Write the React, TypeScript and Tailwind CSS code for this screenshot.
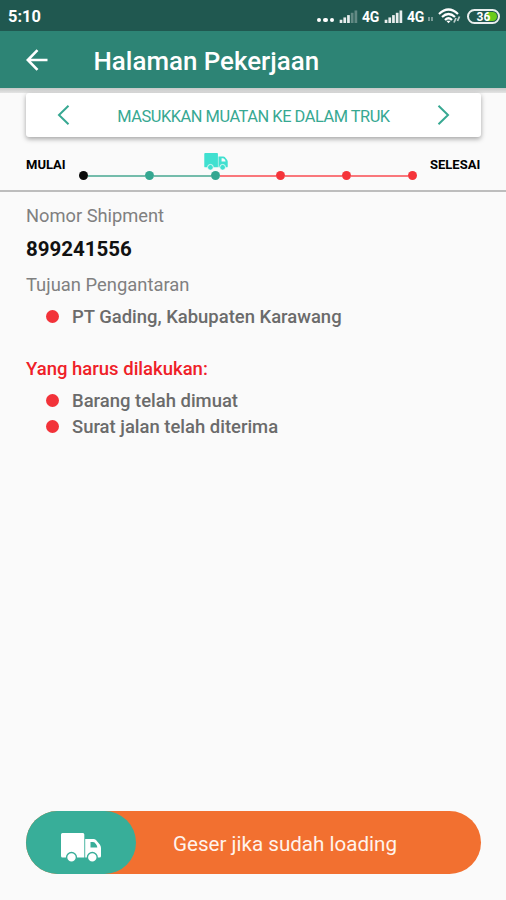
'use client';

import { useState } from 'react';

interface Step {
  name: string;
  status: 'start' | 'done' | 'pending';
}

interface Shipment {
  number: string;
  destinations: string[];
  tasks: string[];
}

const steps: Step[] = [
  { name: 'Mulai', status: 'start' },
  { name: 'Menuju lokasi muat', status: 'done' },
  { name: 'Masukkan muatan ke dalam truk', status: 'done' },
  { name: 'Pengantaran', status: 'pending' },
  { name: 'Bongkar muatan', status: 'pending' },
  { name: 'Selesai', status: 'pending' },
];

const dotColors: Record<Step['status'], string> = {
  start: 'bg-[#0b0b0b]',
  done: 'bg-[#35a791]',
  pending: 'bg-[#f5343a]',
};

const lineColors: Record<Step['status'], string> = {
  start: 'bg-[#0b0b0b]',
  done: 'bg-[#74bcab]',
  pending: 'bg-[#f9777b]',
};

const shipment: Shipment = {
  number: '899241556',
  destinations: ['PT Gading, Kabupaten Karawang'],
  tasks: ['Barang telah dimuat', 'Surat jalan telah diterima'],
};

function Truck({ className }: { className: string }) {
  return (
    <svg viewBox="0 0 40 29" className={className} fill="currentColor" aria-hidden="true">
      <path
        fillRule="evenodd"
        d="M1.5 0H22Q23.3 0 23.3 1.5V24.5H1.5Q0 24.5 0 23V1.5Q0 0 1.5 0ZM24.2 6H32.5Q34 6 35 7L38.8 11.5Q40 13 40 15V23Q40 24.5 38.5 24.5H24.2ZM29.5 9V14.5H36.3Q36.2 12.8 35 11.3L33.6 9.6Q33 9 32 9Z"
      />
      <g className="stroke-(--truck-bg)" strokeWidth="1.4">
        <circle cx="10.5" cy="24.4" r="4.9" />
        <circle cx="31.3" cy="24.4" r="4.9" />
      </g>
    </svg>
  );
}

function Signal({ className, bars }: { className: string; bars: number }) {
  return (
    <svg viewBox="0 0 19 14" className={className} fill="#fff" aria-hidden="true">
      {[0, 1, 2, 3, 4].map((i) => (
        <rect
          key={i}
          x={i * 4}
          y={10.5 - i * 2.5}
          width="2.9"
          height={3.5 + i * 2.5}
          opacity={i < bars ? 0.9 : 0.3}
        />
      ))}
    </svg>
  );
}

function StatusBar() {
  return (
    <div className="flex h-[31px] items-center bg-[#205850] pl-2 pr-[6px] pt-px text-white">
      <span className="pt-[3px] text-[16.4px] font-bold leading-none">5:10</span>
      <div className="ml-auto flex items-center">
        <div className="mr-[5px] mt-2 flex gap-[2px]">
          <i className="size-[4.5px] rounded-full bg-white" />
          <i className="size-[4.5px] rounded-full bg-white" />
          <i className="size-[4.5px] rounded-full bg-white" />
        </div>
        <Signal className="mr-[4px] h-[13px] w-[19px]" bars={3} />
        <span className="mr-[4px] w-[18px] pt-[2px] text-[14px] font-bold leading-none tracking-[-0.3px]">4G</span>
        <Signal className="mr-[4px] h-[13px] w-[19px]" bars={5} />
        <span className="w-[18px] pt-[2px] text-[14px] font-bold leading-none tracking-[-0.3px]">4G</span>
        <div className="ml-[3px] mr-[5px] mt-[6px] flex gap-[1px]">
          <i className="h-[4px] w-[2px] bg-white/40" />
          <i className="h-[4px] w-[2px] bg-white/40" />
        </div>
        <svg viewBox="0 0 23 16" className="mr-[6px] h-[16px] w-[23px]" fill="none" stroke="#fff" strokeWidth="2.2" aria-hidden="true">
          <path d="M1 6Q10.5 -3 20 6M4 9Q10.5 3 17 9M7 12Q10.5 8.5 14 12" />
          <path d="M8.3 12.8L10.5 15.2L12.7 12.8Z" fill="#fff" stroke="none" />
          <path d="M16 14.5L18 10M19.5 13L21.5 8.5" strokeWidth="1.8" opacity="0.7" />
        </svg>
        <div className="relative flex h-[15px] w-[33px] items-center justify-center overflow-hidden rounded-full border-2 border-white/90">
          <i className="absolute inset-y-px right-px w-[10px] rounded-r-full bg-[#6acb1c]" />
          <span className="relative pt-px text-[12px] font-bold leading-none">36</span>
        </div>
      </div>
    </div>
  );
}

function Bullets({ items }: { items: string[] }) {
  return (
    <ul className="pl-5">
      {items.map((item) => (
        <li key={item} className="flex h-[26px] items-center">
          <i className="mr-[13px] size-[13px] rounded-full bg-[#f23239]" />
          <span className="pt-[3px] text-[18.45px] font-medium text-[#6b6b6b]">{item}</span>
        </li>
      ))}
    </ul>
  );
}

export default function App() {
  const [current, setCurrent] = useState(2);

  return (
    <div className="flex h-[900px] w-[506px] flex-col overflow-hidden bg-[#fafafa] font-['Roboto',sans-serif]">
      <StatusBar />

      <header className="flex h-[57px] shrink-0 items-center bg-[#2d8475] pl-[26px] text-white">
        <button aria-label="Kembali" className="mr-[45.5px]">
          <svg viewBox="0 0 22 22" className="size-[22px]" fill="none" stroke="currentColor" strokeWidth="2.6" aria-hidden="true">
            <path d="M11.5 1.2L1.8 11L11.5 20.8M2 11H21.5" />
          </svg>
        </button>
        <h1 className="pt-[4px] text-[25.9px] font-medium leading-none">Halaman Pekerjaan</h1>
      </header>
      <div className="h-[5px] shrink-0 bg-linear-to-b from-[#c6c9c8] to-[#e4e4e4]" />

      {/* Step switcher */}
      <div className="mx-[26px] flex h-[44px] w-[455px] shrink-0 items-center justify-between rounded-[3px] bg-white px-[31px] text-[#37a892] shadow-[0_2px_5px_rgba(0,0,0,0.35)]">
        <button aria-label="Sebelumnya" onClick={() => setCurrent(Math.max(0, current - 1))}>
          <svg viewBox="0 0 13 20" className="h-[20px] w-[13px]" fill="none" stroke="currentColor" strokeWidth="2" aria-hidden="true">
            <path d="M11.5 0.8L2 10L11.5 19.2" />
          </svg>
        </button>
        <span className="pt-[4px] text-[16.4px] uppercase tracking-[-0.47px]">{steps[current].name}</span>
        <button aria-label="Berikutnya" onClick={() => setCurrent(Math.min(steps.length - 1, current + 1))}>
          <svg viewBox="0 0 13 20" className="h-[20px] w-[13px]" fill="none" stroke="currentColor" strokeWidth="2" aria-hidden="true">
            <path d="M1.5 0.8L11 10L1.5 19.2" />
          </svg>
        </button>
      </div>

      {/* Progress */}
      <div className="flex h-[55px] shrink-0 border-b-2 border-[#bdbdbd] pl-[26px] pr-[25px] text-[13px] font-bold text-black">
        <span className="w-[53px] pt-[18px]">MULAI</span>
        <div className="flex flex-1 items-start pt-[34px]">
          {steps.map((step, i) => (
            <div key={step.name} className={i === 0 ? 'flex items-center' : 'flex flex-1 items-center'}>
              {i > 0 && <div className={`h-[2px] flex-1 ${lineColors[step.status]}`} />}
              <div className={`relative size-[9px] rounded-full ${dotColors[step.status]}`}>
                {i === current && (
                  <Truck className="absolute -left-[7px] -top-[18px] h-[17px] w-[24px] max-w-none text-[#40e0d0] [--truck-bg:#fafafa]" />
                )}
              </div>
            </div>
          ))}
        </div>
        <span className="ml-[13px] w-[51px] pt-[18px]">SELESAI</span>
      </div>

      {/* Shipment details */}
      <main className="flex-1 px-[26px] pt-[11px]">
        <p className="text-[18.3px] leading-[26px] text-[#808080]">Nomor Shipment</p>
        <p className="mt-[7px] text-[20.5px] font-bold leading-[26px] text-[#111]">{shipment.number}</p>
        <p className="mb-[5px] mt-[10px] text-[18.4px] leading-[26px] text-[#808080]">Tujuan Pengantaran</p>
        <Bullets items={shipment.destinations} />
        <p className="mb-[5px] mt-[27px] text-[18.5px] font-medium leading-[26px] text-[#ef2027]">Yang harus dilakukan:</p>
        <Bullets items={shipment.tasks} />
      </main>

      {/* Slide to confirm */}
      <div className="mx-[26px] mb-[26px] flex h-[63px] w-[455px] shrink-0 items-center rounded-full bg-[#f27030]">
        <button aria-label="Geser" className="flex h-full w-[110px] items-center justify-center rounded-full bg-[#38ae99]">
          <Truck className="mt-[10px] h-[29px] w-[40px] text-white [--truck-bg:#38ae99]" />
        </button>
        <span className="ml-[37px] pt-[3px] text-[20.6px] text-[#fff3ec]">Geser jika sudah loading</span>
      </div>
    </div>
  );
}
